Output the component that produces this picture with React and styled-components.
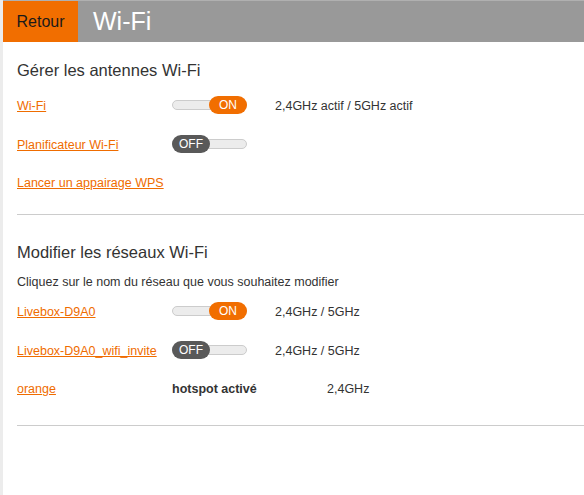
import styled, { createGlobalStyle } from "styled-components";

const GlobalStyle = createGlobalStyle`
  html, body {
    margin: 0;
    padding: 0;
    background: #ffffff;
  }
  body {
    font-family: "Liberation Sans", Arial, sans-serif;
    color: #333333;
  }
`;

const Page = styled.div`
  display: flex;
  min-height: 495px;
  width: 584px;
  overflow: hidden;
`;

const SideStrip = styled.div`
  width: 3px;
  flex: none;
  background: #ececec;
`;

const Main = styled.div`
  flex: 1;
  display: flex;
  flex-direction: column;
  min-width: 0;
`;

const Header = styled.header`
  display: flex;
  align-items: stretch;
  height: 42px;
  background: #999999;
  border-top: 1px solid #b0b0b0;
  box-sizing: border-box;
`;

const BackButton = styled.button`
  width: 75px;
  border: none;
  background: #f16e00;
  color: #1a1a1a;
  font-family: "Liberation Sans", Arial, sans-serif;
  font-size: 16px;
  padding: 0;
  cursor: pointer;
`;

const Title = styled.h1`
  margin: 0 0 0 15px;
  color: #ffffff;
  font-weight: normal;
  font-size: 25px;
  line-height: 40px;
`;

const Section = styled.section`
  padding: ${(p) => p.$pad};
  margin-left: 14px;
  border-bottom: 1px solid #cccccc;
`;

const Heading = styled.h2`
  margin: 0 0 ${(p) => p.$gap || 0}px;
  font-weight: normal;
  font-size: 16.5px;
  line-height: 20px;
  color: #333333;
`;

const Hint = styled.p`
  margin: 0 0 2px;
  font-size: 12.5px;
  line-height: 18px;
`;

const Row = styled.div`
  display: flex;
  align-items: center;
  height: 38.5px;
  font-size: 12.5px;
`;

const Cell = styled.div`
  width: ${(p) => p.$w}px;
  flex: none;
  font-weight: ${(p) => (p.$bold ? "bold" : "normal")};
`;

const Link = styled.a`
  color: #ef6c00;
  text-decoration: underline;
  cursor: pointer;
`;

const Track = styled.div`
  position: relative;
  width: 75px;
  height: 10px;
  margin-top: -2px;
  box-sizing: border-box;
  border: 1px solid #cccccc;
  border-radius: 5px;
  background: #ececec;
`;

const Knob = styled.span`
  position: absolute;
  top: -5px;
  ${(p) => (p.$on ? "right: -1px;" : "left: -1px;")}
  width: 38px;
  height: 18px;
  border-radius: 9px;
  background: ${(p) => (p.$on ? "#f16e00" : "#595959")};
  color: #ffffff;
  font-size: 12px;
  line-height: 18px;
  text-align: center;
`;

function Toggle({ on }) {
  return (
    <Track>
      <Knob $on={on}>{on ? "ON" : "OFF"}</Knob>
    </Track>
  );
}

const antennas = [
  { label: "Wi-Fi", toggle: true, on: true, info: "2,4GHz actif / 5GHz actif" },
  { label: "Planificateur Wi-Fi", toggle: true, on: false },
  { label: "Lancer un appairage WPS" },
];

const networks = [
  { label: "Livebox-D9A0", on: true, info: "2,4GHz / 5GHz" },
  { label: "Livebox-D9A0_wifi_invite", on: false, info: "2,4GHz / 5GHz" },
];

export default function App() {
  return (
    <Page>
      <GlobalStyle />
      <SideStrip />
      <Main>
        <Header>
          <BackButton>Retour</BackButton>
          <Title>Wi-Fi</Title>
        </Header>

        <Section $pad="18px 0 11.5px">
          <Heading $gap={7}>Gérer les antennes Wi-Fi</Heading>
          {antennas.map((a) => (
            <Row key={a.label}>
              <Cell $w={155}>
                <Link>{a.label}</Link>
              </Cell>
              {a.toggle && (
                <Cell $w={103}>
                  <Toggle on={a.on} />
                </Cell>
              )}
              {a.info && <Cell $w={200}>{a.info}</Cell>}
            </Row>
          ))}
        </Section>

        <Section $pad="27px 0 16.5px">
          <Heading $gap={11}>Modifier les réseaux Wi-Fi</Heading>
          <Hint>Cliquez sur le nom du réseau que vous souhaitez modifier</Hint>
          {networks.map((n) => (
            <Row key={n.label}>
              <Cell $w={155}>
                <Link>{n.label}</Link>
              </Cell>
              <Cell $w={103}>
                <Toggle on={n.on} />
              </Cell>
              <Cell $w={150}>{n.info}</Cell>
            </Row>
          ))}
          <Row>
            <Cell $w={155}>
              <Link>orange</Link>
            </Cell>
            <Cell $w={155} $bold>
              hotspot activé
            </Cell>
            <Cell $w={100}>2,4GHz</Cell>
          </Row>
        </Section>
      </Main>
    </Page>
  );
}
